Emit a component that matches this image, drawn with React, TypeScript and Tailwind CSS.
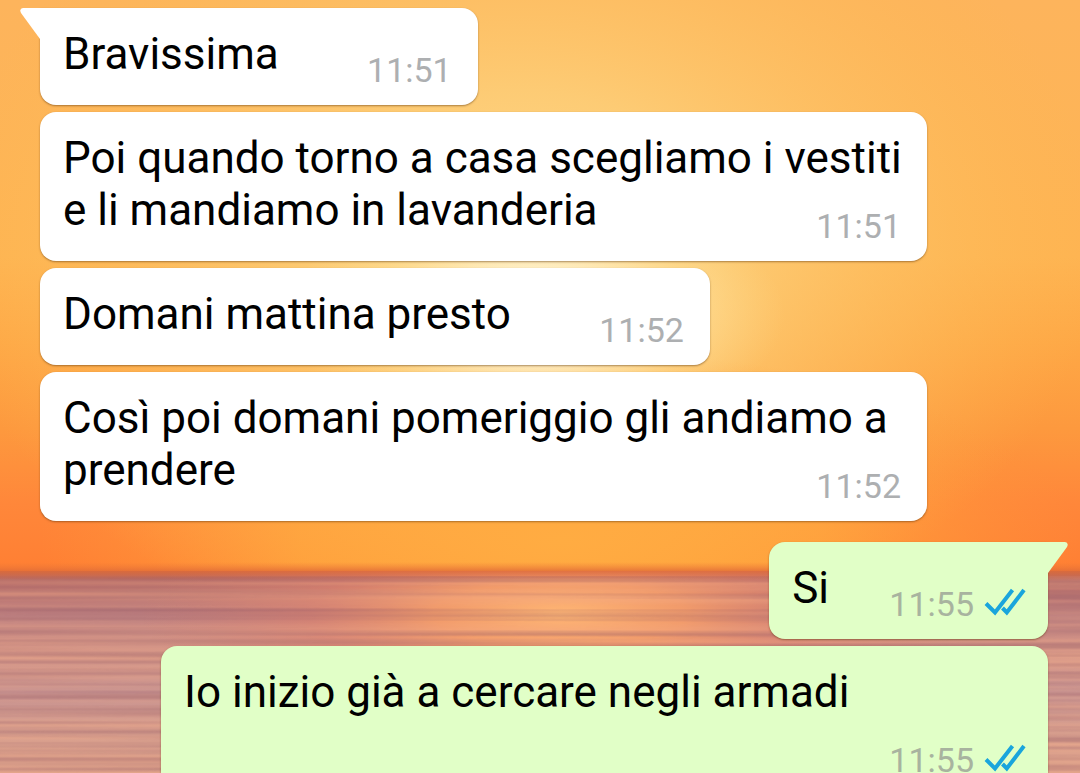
import clsx from "clsx";

type Message = {
  id: number;
  text: string;
  time: string;
  mine?: boolean;
  first?: boolean;
};

const messages: Message[] = [
  { id: 1, text: "Bravissima", time: "11:51", first: true },
  {
    id: 2,
    text: "Poi quando torno a casa scegliamo i vestiti e li mandiamo in lavanderia",
    time: "11:51",
  },
  { id: 3, text: "Domani mattina presto", time: "11:52" },
  {
    id: 4,
    text: "Così poi domani pomeriggio gli andiamo a prendere",
    time: "11:52",
  },
  { id: 5, text: "Si", time: "11:55", mine: true, first: true },
  {
    id: 6,
    text: "Io inizio già a cercare negli armadi",
    time: "11:55",
    mine: true,
  },
];

function Wallpaper() {
  return (
    <svg
      className="absolute inset-0 h-full w-full"
      viewBox="0 0 1080 773"
      preserveAspectRatio="none"
      aria-hidden="true"
    >
      <defs>
        <linearGradient id="sky" x1="0" y1="0" x2="0" y2="1">
          <stop offset="0" stopColor="#fdb45c" />
          <stop offset="0.45" stopColor="#feb452" />
          <stop offset="0.6" stopColor="#fea846" />
          <stop offset="0.75" stopColor="#fd993e" />
          <stop offset="0.88" stopColor="#ff873a" />
          <stop offset="1" stopColor="#ff7f33" />
        </linearGradient>
        <radialGradient
          id="haze"
          gradientUnits="userSpaceOnUse"
          cx="0"
          cy="0"
          r="1"
          gradientTransform="translate(520 240) scale(580 420)"
        >
          <stop offset="0" stopColor="#ffdb8c" />
          <stop offset="0.35" stopColor="#fdce78" stopOpacity="0.9" />
          <stop offset="0.7" stopColor="#fdc162" stopOpacity="0.5" />
          <stop offset="1" stopColor="#fdb950" stopOpacity="0" />
        </radialGradient>
        <radialGradient
          id="sun"
          gradientUnits="userSpaceOnUse"
          cx="0"
          cy="0"
          r="1"
          gradientTransform="translate(535 315) scale(250 120)"
        >
          <stop offset="0" stopColor="#ffffff" />
          <stop offset="0.4" stopColor="#fff3d0" stopOpacity="0.8" />
          <stop offset="0.7" stopColor="#ffe4a0" stopOpacity="0.4" />
          <stop offset="1" stopColor="#ffdd90" stopOpacity="0" />
        </radialGradient>
        <radialGradient
          id="dusk"
          gradientUnits="userSpaceOnUse"
          cx="0"
          cy="0"
          r="1"
          gradientTransform="translate(560 540) scale(520 190)"
        >
          <stop offset="0" stopColor="#ffac42" />
          <stop offset="0.5" stopColor="#ffa93e" stopOpacity="0.75" />
          <stop offset="1" stopColor="#ff9a3a" stopOpacity="0" />
        </radialGradient>
        <linearGradient id="sea" x1="0" y1="0" x2="0" y2="1">
          <stop offset="0" stopColor="#c0664a" />
          <stop offset="0.05" stopColor="#bb7069" />
          <stop offset="0.22" stopColor="#be8080" />
          <stop offset="0.42" stopColor="#da9a88" />
          <stop offset="0.6" stopColor="#c79290" />
          <stop offset="0.8" stopColor="#d89f8e" />
          <stop offset="1" stopColor="#e0a38a" />
        </linearGradient>
        <radialGradient
          id="glint"
          gradientUnits="userSpaceOnUse"
          cx="0"
          cy="0"
          r="1"
          gradientTransform="translate(560 614) scale(420 110)"
        >
          <stop offset="0" stopColor="#ffb674" />
          <stop offset="0.3" stopColor="#faa068" stopOpacity="0.85" />
          <stop offset="0.6" stopColor="#e0826c" stopOpacity="0.55" />
          <stop offset="1" stopColor="#d67e6e" stopOpacity="0" />
        </radialGradient>
        <linearGradient id="horizon" x1="0" y1="0" x2="0" y2="1">
          <stop offset="0" stopColor="#f07a35" stopOpacity="0" />
          <stop offset="0.5" stopColor="#e06c38" stopOpacity="0.8" />
          <stop offset="1" stopColor="#d9694a" stopOpacity="0" />
        </linearGradient>
        <filter
          id="ripples"
          x="0"
          y="0"
          width="100%"
          height="100%"
          colorInterpolationFilters="sRGB"
        >
          <feTurbulence
            type="fractalNoise"
            baseFrequency="0.001 0.14"
            numOctaves="2"
            seed="8"
          />
          <feColorMatrix
            type="matrix"
            values="0 0 0 0 0.56  0 0 0 0 0.34  0 0 0 0 0.4  3 0 0 0 -1.2"
          />
        </filter>
        <filter
          id="shine"
          x="0"
          y="0"
          width="100%"
          height="100%"
          colorInterpolationFilters="sRGB"
        >
          <feTurbulence
            type="fractalNoise"
            baseFrequency="0.001 0.1"
            numOctaves="2"
            seed="21"
          />
          <feColorMatrix
            type="matrix"
            values="0 0 0 0 0.96  0 0 0 0 0.68  0 0 0 0 0.54  3 0 0 0 -1.2"
          />
        </filter>
      </defs>

      <rect width="1080" height="572" fill="url(#sky)" />
      <rect width="1080" height="572" fill="url(#haze)" />
      <rect width="1080" height="572" fill="url(#dusk)" />
      <rect width="1080" height="572" fill="url(#sun)" />
      <rect y="571" width="1080" height="202" fill="url(#sea)" />
      <rect y="571" width="1080" height="202" fill="url(#glint)" />
      <rect y="576" width="1080" height="197" filter="url(#shine)" opacity="0.35" />
      <rect y="576" width="1080" height="197" filter="url(#ripples)" opacity="0.35" />
      <rect y="562" width="1080" height="18" fill="url(#horizon)" />
    </svg>
  );
}

function Tail({ mine }: { mine?: boolean }) {
  return (
    <svg
      viewBox="0 0 32 32"
      className={clsx(
        "absolute top-0 size-8",
        mine ? "-right-5 text-[#e1ffc7]" : "-left-5 -scale-x-100 text-white"
      )}
      aria-hidden="true"
    >
      <path d="M0 0H29Q33 0.500 31 5L12 31H0Z" fill="currentColor" />
    </svg>
  );
}

function ReadTicks() {
  return (
    <svg
      viewBox="0 0 42 28"
      className="mb-1 h-7 w-[42px]"
      fill="none"
      stroke="#1aa5dc"
      strokeWidth="4"
      role="img"
      aria-label="Letto"
    >
      <path d="M2 15.500L11 24.500L28.500 2" />
      <path d="M18.500 20L22.800 24.500L40 2" />
    </svg>
  );
}

function Bubble({ text, time, mine, first }: Message) {
  return (
    <li
      className={clsx(
        "relative max-w-[88%] rounded-2xl pt-5 pr-6 pb-[25px] pl-[23px] shadow-[0_1px_2px_rgba(90,50,10,0.5)]",
        mine ? "self-end bg-[#e1ffc7]" : "self-start bg-white",
        first && (mine ? "mt-3.5 rounded-tr-none" : "rounded-tl-none")
      )}
    >
      {first && <Tail mine={mine} />}
      <p className="text-[44px] leading-[52px] text-black">
        {text}
        {/* keeps room for the time on the last line */}
        <span
          className={clsx("inline-block", mine ? "w-[195px]" : "w-[175px]")}
        />
      </p>
      <div
        className={clsx(
          "absolute bottom-[15px] flex items-center gap-2.5 text-[34px] leading-10",
          mine ? "right-[22px] text-[#a8b39f]" : "right-[26px] text-[#adafb1]"
        )}
      >
        <time>{time}</time>
        {mine && <ReadTicks />}
      </div>
    </li>
  );
}

export default function App() {
  return (
    <main className="relative h-screen overflow-hidden font-[Roboto,sans-serif]">
      <Wallpaper />
      <ul className="relative flex flex-col gap-[7px] pt-2 pr-8 pl-10">
        {messages.map((message) => (
          <Bubble key={message.id} {...message} />
        ))}
      </ul>
    </main>
  );
}
